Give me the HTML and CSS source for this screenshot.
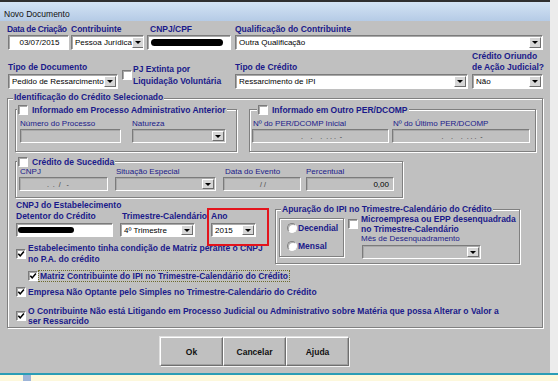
FILE: index.html
```html
<!DOCTYPE html>
<html lang="pt-BR">
<head>
    <meta charset="UTF-8">
    <meta name="viewport" content="width=device-width, initial-scale=1.0">
    <title>Novo Documento</title>
    <link rel="stylesheet" href="styles.css">
</head>
<body>
<div class="window">
    <div class="titlebar">Novo Documento</div>
    <div class="content">
        <!-- linha 1 -->
        <div class="row row-top">
            <div class="field f-data">
                <span class="lbl narrow">Data de Criação</span>
                <div class="input white centered">03/07/2015</div>
            </div>
            <div class="field f-contrib">
                <span class="lbl">Contribuinte</span>
                <div class="input white"><span>Pessoa Jurídica</span><i class="arrow"></i></div>
            </div>
            <div class="field f-cnpj">
                <span class="lbl indent">CNPJ/CPF</span>
                <div class="input white"><span class="redact r-cpf"></span></div>
            </div>
            <div class="field f-qualif">
                <span class="lbl">Qualificação do Contribuinte</span>
                <div class="input white"><span>Outra Qualificação</span><i class="arrow"></i></div>
            </div>
        </div>

        <!-- linha 2 -->
        <div class="row row-second">
            <div class="field f-tipodoc">
                <span class="lbl lbl-tight">Tipo de Documento</span>
                <div class="input white"><span>Pedido de Ressarcimento</span><i class="arrow"></i></div>
            </div>
            <div class="pj">
                <span class="chk"></span>
                <span class="lbl pj-text">PJ Extinta por<br>Liquidação Voluntária</span>
            </div>
            <div class="field f-tipocred">
                <span class="lbl lbl-tight">Tipo de Crédito</span>
                <div class="input white"><span>Ressarcimento de IPI</span><i class="arrow"></i></div>
            </div>
            <div class="field f-oriundo">
                <span class="lbl lbl-tight">Crédito Oriundo<br>de Ação Judicial?</span>
                <div class="input white"><span>Não</span><i class="arrow"></i></div>
            </div>
        </div>

        <!-- identificação do crédito -->
        <div class="group g-ident">
            <div class="group-title t-ident"><span class="lbl">Identificação do Crédito Selecionado</span></div>

            <div class="row sub-row">
                <div class="group g-proc">
                    <div class="group-title t-proc">
                        <span class="chk"></span>
                        <span class="lbl">Informado em Processo Administrativo Anterior</span>
                    </div>
                    <div class="row sub-fields">
                        <div class="field f-numproc">
                            <span class="lbl small">Número do Processo</span>
                            <div class="input short"></div>
                        </div>
                        <div class="field f-natureza">
                            <span class="lbl small">Natureza</span>
                            <div class="input short"><span></span><i class="arrow"></i></div>
                        </div>
                    </div>
                </div>

                <div class="group g-per">
                    <div class="group-title t-per">
                        <span class="chk"></span>
                        <span class="lbl">Informado em Outro PER/DCOMP</span>
                    </div>
                    <div class="row sub-fields">
                        <div class="field f-perini">
                            <span class="lbl small">Nº do PER/DCOMP Inicial</span>
                            <div class="input short centered mask">.    .    .  . . .  -</div>
                        </div>
                        <div class="field f-perult">
                            <span class="lbl small">Nº do Último PER/DCOMP</span>
                            <div class="input short centered mask">.    .    .  . . .  -</div>
                        </div>
                    </div>
                </div>
            </div>

            <div class="group g-suc">
                <div class="group-title t-suc">
                    <span class="chk"></span>
                    <span class="lbl">Crédito de Sucedida</span>
                </div>
                <div class="row suc-fields">
                    <div class="field f-sucnpj">
                        <span class="lbl small">CNPJ</span>
                        <div class="input short mask cnpj-mask">.  .  /   -</div>
                    </div>
                    <div class="field f-situacao">
                        <span class="lbl small">Situação Especial</span>
                        <div class="input short"><span></span><i class="arrow"></i></div>
                    </div>
                    <div class="field f-evento">
                        <span class="lbl small">Data do Evento</span>
                        <div class="input short centered mask">/ /</div>
                    </div>
                    <div class="field f-percent">
                        <span class="lbl small">Percentual</span>
                        <div class="input short right">0,00</div>
                    </div>
                </div>
            </div>

            <div class="row lower">
                <div class="lower-left">
                    <div class="row estab-row">
                        <div class="field f-estab">
                            <span class="lbl lbl-tight">CNPJ do Estabelecimento<br>Detentor do Crédito</span>
                            <div class="input short white"><span class="redact r-estab"></span></div>
                        </div>
                        <div class="field f-trim">
                            <span class="lbl lbl-tight">Trimestre-Calendário</span>
                            <div class="input short white"><span>4º Trimestre</span><i class="arrow"></i></div>
                        </div>
                        <div class="field f-ano">
                            <span class="lbl lbl-tight">Ano</span>
                            <div class="input short white"><span>2015</span><i class="arrow"></i></div>
                        </div>
                        <div class="highlight"></div>
                    </div>
                    <div class="check-row cb-first">
                        <span class="chk on"><svg viewBox="0 0 8 8"><path d="M1.3 3.8 L3.2 5.9 L6.9 1.6"/></svg></span>
                        <span class="lbl two">Estabelecimento tinha condição de Matriz perante o CNPJ<br>no P.A. do crédito</span>
                    </div>
                </div>

                <div class="group g-apur">
                    <div class="group-title t-apur"><span class="lbl">Apuração do IPI no Trimestre-Calendário do Crédito</span></div>
                    <div class="row apur-body">
                        <div class="radio-box">
                            <div class="radio-row"><span class="radio"></span><span class="lbl">Decendial</span></div>
                            <div class="radio-row"><span class="radio"></span><span class="lbl">Mensal</span></div>
                        </div>
                        <span class="chk micro-chk"></span>
                        <div class="micro">
                            <span class="lbl ten">Microempresa ou EPP desenquadrada<br>no Trimestre-Calendário</span>
                            <span class="lbl small ten">Mês de Desenquadramento</span>
                            <div class="input short f-mes"><span></span><i class="arrow"></i></div>
                        </div>
                    </div>
                </div>
            </div>

            <div class="check-row cb-matriz">
                <span class="chk on"><svg viewBox="0 0 8 8"><path d="M1.3 3.8 L3.2 5.9 L6.9 1.6"/></svg></span>
                <span class="lbl focus">Matriz Contribuinte do IPI no Trimestre-Calendário do Crédito</span>
            </div>
            <div class="check-row cb-simples">
                <span class="chk on"><svg viewBox="0 0 8 8"><path d="M1.3 3.8 L3.2 5.9 L6.9 1.6"/></svg></span>
                <span class="lbl">Empresa Não Optante pelo Simples no Trimestre-Calendário do Crédito</span>
            </div>
            <div class="check-row cb-litigio">
                <span class="chk on"><svg viewBox="0 0 8 8"><path d="M1.3 3.8 L3.2 5.9 L6.9 1.6"/></svg></span>
                <span class="lbl ten">O Contribuinte Não está Litigando em Processo Judicial ou Administrativo sobre Matéria que possa Alterar o Valor a<br>ser Ressarcido</span>
            </div>
        </div>

        <div class="buttons">
            <div class="btn-group">
                <button class="btn">Ok</button>
                <button class="btn">Cancelar</button>
                <button class="btn">Ajuda</button>
            </div>
        </div>
    </div>
</div>
<div class="taskbar"><span class="task-icon"></span></div>
</body>
</html>
```

FILE: styles.css
```css
* {
    box-sizing: border-box;
}
body {
    margin: 0;
    background: #ececec;
    font-family: "Liberation Sans", Arial, sans-serif;
}
.window {
    width: 550px;
    height: 373px;
    background: #c0c0c0;
    border-top: 2px solid #2f2f2f;
}
.titlebar {
    height: 19px;
    padding: 6px 0 0 4px;
    background: linear-gradient(#d3e3f4, #b5cbe6);
    font-size: 8.5px;
    line-height: 13px;
    color: #111;
}
.content {
    padding: 2px 6px 0 8px;
}
.row {
    display: flex;
}
.field {
    display: flex;
    flex-direction: column;
}

/* textos */
.lbl {
    font-size: 8.5px;
    font-weight: bold;
    color: #1a1a8a;
    line-height: 12px;
    white-space: nowrap;
}
.lbl-tight {
    line-height: 11px;
    margin-bottom: 1px;
}
.lbl.small {
    font-weight: normal;
    font-size: 8px;
    line-height: 11px;
}
.lbl.ten {
    line-height: 10px;
}
.lbl.two {
    line-height: 11px;
}
.narrow {
    margin-left: -1px;
    letter-spacing: -0.3px;
}
.indent {
    padding-left: 3px;
}

/* campos */
.input {
    height: 15px;
    display: flex;
    align-items: center;
    padding: 0 1px 0 3px;
    border: 1px solid;
    border-color: #7b7b7b #fff #fff #7b7b7b;
    box-shadow: inset 1px 1px 0 #a9a9a9;
    font-size: 8px;
    color: #000;
    white-space: nowrap;
    overflow: hidden;
}
.input.short {
    height: 14px;
}
.input.white {
    background: #fff;
}
.input.centered {
    justify-content: center;
}
.input.right {
    justify-content: flex-end;
    padding-right: 4px;
}
.mask {
    white-space: pre;
    color: #3a3a3a;
    font-size: 7px;
}
.cnpj-mask {
    padding-left: 27px;
}
.arrow {
    flex-shrink: 0;
    width: 12px;
    height: 11px;
    margin-left: auto;
    background: #d6d6d6;
    border: 1px solid;
    border-color: #fff #6e6e6e #6e6e6e #fff;
    display: flex;
    align-items: center;
    justify-content: center;
}
.input.short .arrow {
    height: 10px;
}
.arrow::after {
    content: "";
    border-left: 3px solid transparent;
    border-right: 3px solid transparent;
    border-top: 3px solid #000;
}
.redact {
    display: block;
    background: #000;
    border-radius: 4px;
}
.r-cpf {
    width: 72px;
    height: 7px;
}
.r-estab {
    width: 56px;
    height: 6px;
    margin-left: -2px;
}

/* caixas de marcação */
.chk {
    flex-shrink: 0;
    width: 10px;
    height: 10px;
    background: #fff;
    border: 1px solid;
    border-color: #7b7b7b #fff #fff #7b7b7b;
    box-shadow: inset 1px 1px 0 #a9a9a9;
    display: flex;
    align-items: center;
    justify-content: center;
}
.chk svg {
    width: 8px;
    height: 8px;
}
.chk path {
    fill: none;
    stroke: #000;
    stroke-width: 1.6;
}
.radio {
    flex-shrink: 0;
    width: 10px;
    height: 10px;
    border-radius: 50%;
    background: #fff;
    border: 1px solid;
    border-color: #808080 #fff #fff #808080;
    box-shadow: inset 1px 1px 0 #b0b0b0;
}

/* linha 1 e 2 */
.f-data { width: 61px; }
.f-contrib { width: 73px; margin-left: 2px; }
.f-cnpj { width: 84px; margin-left: 3px; }
.f-qualif { width: 308px; margin-left: 4px; }

.row-second {
    margin-top: 1px;
    align-items: flex-end;
}
.f-tipodoc { width: 110px; }
.pj {
    width: 109px;
    margin-left: 4px;
    margin-bottom: 2px;
    display: flex;
    align-items: center;
}
.pj-text {
    margin-left: 1px;
}
.f-tipocred { width: 233px; margin-left: 4px; }
.f-oriundo { width: 71px; margin-left: 4px; }

/* grupos */
.group {
    border: 1px solid #808080;
    box-shadow: inset 1px 1px 0 #fff, 1px 1px 0 #fff;
}
.group-title {
    display: flex;
    align-items: center;
    width: fit-content;
    height: 12px;
    background: #c0c0c0;
    padding: 0 1px;
}
.g-ident {
    margin: 9px 0 0 -1px;
    width: 536px;
    height: 230px;
    padding-left: 7px;
}
.t-ident {
    margin: -8px 0 0 -2px;
}
.sub-row {
    margin-top: 6px;
}
.g-proc {
    width: 222px;
    height: 43px;
}
.t-proc,
.t-suc {
    margin: -6px 0 0 1px;
}
.t-proc .chk,
.t-suc .chk,
.t-per .chk {
    margin-right: 4px;
}
.sub-fields {
    margin-top: 2px;
}
.g-proc .sub-fields {
    padding-left: 4px;
}
.f-numproc { width: 101px; }
.f-natureza { width: 94px; margin-left: 11px; }

.g-per {
    width: 287px;
    height: 43px;
    margin-left: 12px;
}
.t-per {
    margin: -6px 0 0 7px;
}
.g-per .sub-fields {
    padding-left: 2px;
}
.f-perini { width: 137px; }
.f-perult { width: 138px; margin-left: 3px; }
.f-perini .lbl,
.f-perult .lbl {
    padding-left: 1px;
}

.g-suc {
    width: 388px;
    height: 37px;
    margin-top: 9px;
}
.suc-fields {
    margin-top: -2px;
    padding-left: 3px;
}
.f-sucnpj { width: 89px; }
.f-situacao { width: 101px; margin-left: 7px; }
.f-evento { width: 78px; margin-left: 7px; }
.f-percent { width: 88px; margin-left: 5px; }
.f-situacao .lbl,
.f-sucnpj .lbl {
    padding-left: 1px;
}
.f-evento .lbl {
    padding-left: 2px;
}

/* parte inferior */
.lower {
    margin-top: 2px;
}
.lower-left {
    width: 258px;
    margin-left: 1px;
}
.estab-row {
    position: relative;
    align-items: flex-end;
}
.f-estab { width: 97px; }
.f-trim { width: 75px; margin-left: 7px; }
.f-trim .lbl { padding-left: 2px; }
.f-ano { width: 45px; margin-left: 16px; }
.highlight {
    position: absolute;
    left: 191px;
    top: 8px;
    width: 62px;
    height: 38px;
    border: 2px solid #e3141c;
}
.check-row {
    display: flex;
    align-items: center;
}
.check-row .chk {
    margin-right: 2px;
}
.cb-first {
    margin-top: 6px;
}
.g-apur {
    width: 245px;
    height: 55px;
    margin: 9px 0 0 1px;
}
.t-apur {
    margin: -7px 0 0 5px;
}
.apur-body {
    margin-top: -1px;
    align-items: flex-start;
}
.radio-box {
    width: 65px;
    height: 39px;
    margin: 4px 0 0 3px;
    border: 1px solid #808080;
    box-shadow: inset 1px 1px 0 #fff, 1px 1px 0 #fff;
    padding-left: 7px;
}
.radio-row {
    height: 18px;
    display: flex;
    align-items: center;
}
.radio-row .radio {
    margin-right: 1px;
}
.micro-chk {
    margin: 5px 0 0 4px;
}
.micro {
    display: flex;
    flex-direction: column;
    margin-left: 3px;
}
.f-mes {
    width: 119px;
    margin: 1px 0 0 1px;
}

.cb-matriz {
    margin: 5px 0 0 13px;
}
.focus {
    line-height: 10px;
    border: 1px dotted #6d6a2c;
    padding: 0 1px;
    margin-left: -2px;
}
.cb-matriz .chk {
    margin-right: 2px;
}
.cb-simples {
    margin: 4px 0 0 1px;
    line-height: 11px;
}
.cb-litigio {
    margin: 8px 0 0 1px;
}

/* botões */
.buttons {
    margin-top: 9px;
    padding-left: 152px;
}
.btn-group {
    display: flex;
    width: fit-content;
    box-shadow: 1px 1px 0 #f4f4f4, -1px -1px 0 #e0e0e0;
}
.btn {
    width: 63px;
    height: 29px;
    background: #c0c0c0;
    border: 1px solid;
    border-color: #fff #6f6f6f #6f6f6f #fff;
    box-shadow: inset -1px -1px 0 #a0a0a0;
    font-family: "Liberation Sans", Arial, sans-serif;
    font-size: 8.5px;
    font-weight: bold;
    color: #111;
    padding: 0;
}

.taskbar {
    width: 558px;
    height: 8px;
    border-top: 2px solid #2a9db6;
    background: #fdf8dc;
    padding-left: 23px;
}
.task-icon {
    display: block;
    width: 8px;
    height: 6px;
    background: #9db4d8;
}
```
